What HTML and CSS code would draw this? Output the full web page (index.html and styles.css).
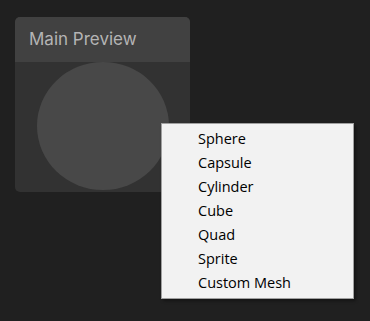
FILE: index.html
```html
<!DOCTYPE html>
<html>
<head>
    <link rel="stylesheet" href="styles.css">
</head>
<body>
    <div class="preview">
        <div class="previewHeader">Main Preview</div>
        <div class="previewBody">
            <div class="sphere"></div>
        </div>
    </div>

    <ul class="menu">
        <li>Sphere</li>
        <li>Capsule</li>
        <li>Cylinder</li>
        <li>Cube</li>
        <li>Quad</li>
        <li>Sprite</li>
        <li>Custom Mesh</li>
    </ul>
</body>
</html>
```

FILE: styles.css
```css
body {
    margin: 0;
    width: 370px;
    height: 321px;
    background-color: #202020;
    position: relative;
    overflow: hidden;
    font-family: 'Inter', 'Noto Sans', sans-serif;
}
.preview {
    margin: 17px 0 0 15px;
    width: 175px;
    height: 175px;
    border-radius: 5px;
    overflow: hidden;
    background-color: #323232;
    display: flex;
    flex-direction: column;
}
.previewHeader {
    height: 45px;
    flex-shrink: 0;
    box-sizing: border-box;
    padding: 11px 0 0 14px;
    background-color: #414141;
    color: #b4b4b4;
    font-size: 17px;
    line-height: 22px;
}
.previewBody {
    flex: 1;
    display: flex;
    justify-content: center;
}
.sphere {
    width: 132px;
    height: 128px;
    border-radius: 50%;
    background-color: #484848;
}
.menu {
    position: absolute;
    left: 161px;
    top: 123px;
    width: 193px;
    margin: 0;
    padding: 3px 0;
    list-style: none;
    box-sizing: border-box;
    background-color: #f2f2f2;
    border: 1px solid #a0a0a0;
    box-shadow: 2px 2px 3px rgba(0, 0, 0, 0.4);
    font-family: 'Open Sans', 'Noto Sans', sans-serif;
    font-size: 14.5px;
    color: #000;
}
.menu li {
    height: 24px;
    line-height: 24px;
    padding-left: 36px;
}
```
